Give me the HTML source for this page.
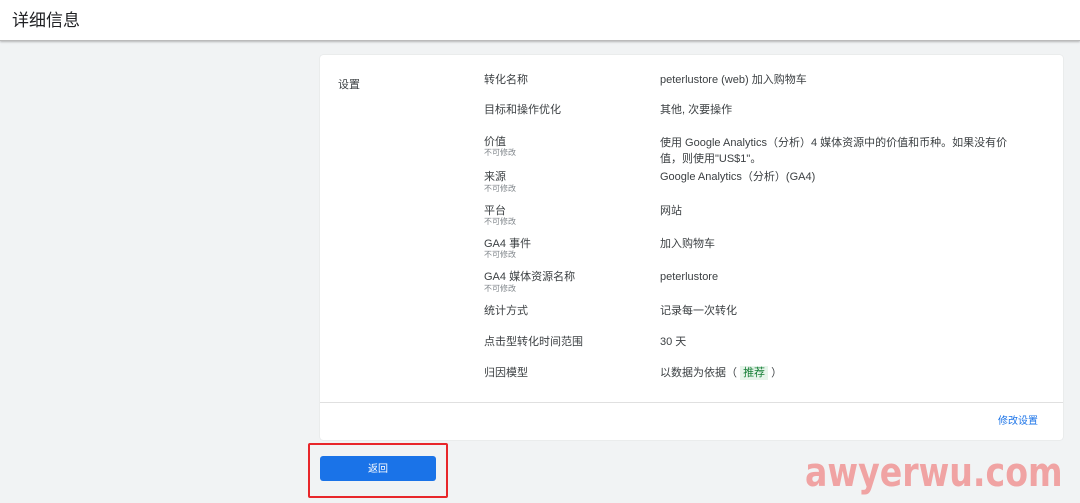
<!DOCTYPE html>
<html><head><meta charset="utf-8"><style>
body{margin:0;width:1080px;height:503px;background:#f1f3f4;font-family:"Liberation Sans","Noto Sans CJK SC",sans-serif;position:relative;overflow:hidden;color:#3c4043}
.hdr{position:absolute;left:0;top:0;width:1080px;height:40px;background:#fff;border-bottom:1px solid #bbb;box-shadow:0 1px 2px rgba(0,0,0,.25)}
.hdr span{position:absolute;left:12px;top:6px;font-size:17px;color:#202124}
.card{position:absolute;left:320px;top:55px;width:743px;height:385px;background:#fff;border-radius:3px;box-shadow:0 0 1px rgba(0,0,0,.2)}
.div{position:absolute;left:320px;top:402px;width:743px;height:1px;background:#e0e0e0}
.t{position:absolute;font-size:11px;white-space:nowrap;line-height:14px;margin-top:2px}
.s{position:absolute;font-size:8px;color:#80868b;line-height:10px;margin-top:1px}
.btn{position:absolute;left:320px;top:456px;width:116px;height:25px;background:#1a73e8;border-radius:3px;color:#fff;font-size:10px;text-align:center;line-height:28px}
.red{position:absolute;left:308px;top:443px;width:136px;height:51px;border:2px solid #e8262a;border-radius:2px}
.wm{position:absolute;left:805px;top:450px;font-size:40px;line-height:46px;color:#f0a3a3;font-family:"DejaVu Sans",sans-serif;font-weight:bold;transform:scaleX(0.83);transform-origin:0 0;white-space:nowrap}
.tag{background:#e6f4ea;color:#188038;padding:1px 3px}
</style></head><body>
<div class="hdr"><span>详细信息</span></div>
<div class="card"></div>
<div class="div"></div>
<div class="t" style="left:338px;top:76px">设置</div>
<div class="t" style="left:484px;top:71px">转化名称</div><div class="t" style="left:660px;top:71px">peterlustore (web) 加入购物车</div>
<div class="t" style="left:484px;top:101px">目标和操作优化</div><div class="t" style="left:660px;top:101px">其他, 次要操作</div>
<div class="t" style="left:484px;top:133px">价值</div><div class="s" style="left:484px;top:147px">不可修改</div>
<div class="t" style="left:660px;top:133px;line-height:16px">使用 Google Analytics（分析）4 媒体资源中的价值和币种。如果没有价<br>值，则使用"US$1"。</div>
<div class="t" style="left:484px;top:168px">来源</div><div class="s" style="left:484px;top:183px">不可修改</div><div class="t" style="left:660px;top:168px">Google Analytics（分析）(GA4)</div>
<div class="t" style="left:484px;top:202px">平台</div><div class="s" style="left:484px;top:216px">不可修改</div><div class="t" style="left:660px;top:202px">网站</div>
<div class="t" style="left:484px;top:235px">GA4 事件</div><div class="s" style="left:484px;top:249px">不可修改</div><div class="t" style="left:660px;top:235px">加入购物车</div>
<div class="t" style="left:484px;top:268px">GA4 媒体资源名称</div><div class="s" style="left:484px;top:283px">不可修改</div><div class="t" style="left:660px;top:268px">peterlustore</div>
<div class="t" style="left:484px;top:302px">统计方式</div><div class="t" style="left:660px;top:302px">记录每一次转化</div>
<div class="t" style="left:484px;top:333px">点击型转化时间范围</div><div class="t" style="left:660px;top:333px">30 天</div>
<div class="t" style="left:484px;top:364px">归因模型</div><div class="t" style="left:660px;top:364px">以数据为依据（ <span class="tag">推荐</span> ）</div>
<div class="t" style="left:998px;top:413px;color:#1a73e8;font-size:10px">修改设置</div>
<div class="red"></div>
<div class="btn">返回</div>
<div class="wm">awyerwu.com</div>
</body></html>
